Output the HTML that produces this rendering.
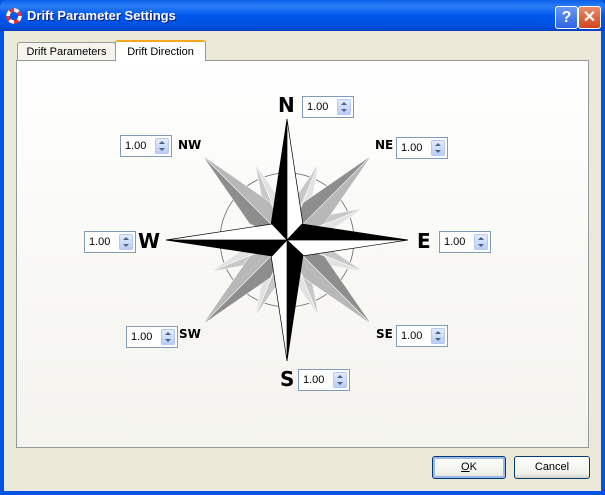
<!DOCTYPE html>
<html><head><style>
body{margin:0;width:605px;height:495px;overflow:hidden;font-family:Tahoma,"Liberation Sans",sans-serif;font-size:11px;}
.win{position:absolute;left:0;top:0;width:605px;height:495px;background:#0054e3;}
.title{position:absolute;left:0;top:0;width:605px;height:31px;background:linear-gradient(#0a5fe8,#2b7cf5 20%,#0058ee 50%,#0050de 85%,#0040c0);border-radius:7px 7px 0 0;}
.title span{position:absolute;left:27px;top:8px;color:#fff;font-weight:bold;font-size:13px;font-family:"Liberation Sans",sans-serif;text-shadow:1px 1px #0a1f80;}
.body{position:absolute;left:4px;top:31px;width:597px;height:460px;background:#ece9d8;}
.tb{position:absolute;top:6px;width:21px;height:21px;border:1px solid #fff;border-radius:3px;color:#fff;font-weight:bold;text-align:center;font-size:16px;line-height:21px;font-family:"Liberation Sans",sans-serif;}
.panel{position:absolute;left:16px;top:60px;width:571px;height:386px;border:1px solid #919b9c;background:linear-gradient(#fff,#fbfbf9 30%,#f4f3ee);}
.tab{position:absolute;height:18px;border:1px solid #919b9c;border-bottom:none;border-radius:3px 3px 0 0;font-size:11px;line-height:18px;text-align:center;}
.sp{position:absolute;width:50px;height:20px;border:1px solid #7f9db9;background:#fff;}
.sp span{position:absolute;left:4px;top:4px;font-size:11px;}
.sp i{position:absolute;right:2px;top:2px;width:14px;height:16px;background:linear-gradient(#e4ecfd,#b9cdf6);border:1px solid #b5c8f0;border-radius:2px;box-sizing:border-box}
.sp i:before{content:"";position:absolute;left:3px;top:2px;border:3px solid transparent;border-bottom:3px solid #4d6185;border-top:none;}
.sp i:after{content:"";position:absolute;left:3px;top:9px;border:3px solid transparent;border-top:3px solid #4d6185;border-bottom:none;}
.lb{position:absolute;font-weight:bold;font-family:"DejaVu Sans",sans-serif;font-size:12px;}
.big{font-size:20px;}
.btn{position:absolute;top:456px;height:21px;border:1px solid #003c74;border-radius:3px;background:linear-gradient(#fff,#f0f0ea 80%,#d6d0c5);text-align:center;line-height:21px;font-size:11px;}
</style></head><body>
<div class="win">
<div class="title">
<svg style="position:absolute;left:6px;top:8px" width="16" height="16"><circle cx="8" cy="8" r="6" fill="none" stroke="#e33" stroke-width="3.5"/><circle cx="8" cy="8" r="6" fill="none" stroke="#fff" stroke-width="3.5" stroke-dasharray="4.7 4.7"/></svg>
<span>Drift Parameter Settings</span>
<div class="tb" style="left:555px;background:linear-gradient(#6a97f5,#2d64e0)">?</div>
<div class="tb" style="left:578px;background:linear-gradient(#e98b6a,#d2451f)">✕</div>
</div>
<div class="body"></div>
<div class="tab" style="left:17px;top:42px;width:97px;background:#f5f4ee">Drift Parameters</div>
<div class="panel"></div>
<div class="tab" style="left:115px;top:40px;width:91px;height:21px;background:#fff;border-top:2px solid #f5a623;box-sizing:border-box;line-height:20px;border-bottom:none">Drift Direction</div>
<svg style="position:absolute;left:0;top:0" width="605" height="495">
<circle cx="287" cy="240" r="67" fill="none" stroke="#666" stroke-width="0.8"/>
<g stroke="#fff" stroke-width="0.5">
<g id="m"><polygon points="287,240 287,157 278,200" fill="#c8c8c8"/><polygon points="287,240 287,157 296,200" fill="#e2e2e2"/></g>
<use href="#m" transform="rotate(22.5 287 240)"/><use href="#m" transform="rotate(-22.5 287 240)"/>
<use href="#m" transform="rotate(67.5 287 240)"/><use href="#m" transform="rotate(112.5 287 240)"/>
<use href="#m" transform="rotate(157.5 287 240)"/><use href="#m" transform="rotate(202.5 287 240)"/>
<use href="#m" transform="rotate(247.5 287 240)"/>
<g id="d" transform="rotate(45 287 240)"><polygon points="287,240 287,120 272,202" fill="#8e8e8e"/><polygon points="287,240 287,120 302,202" fill="#b8b8b8"/></g>
<use href="#d" transform="rotate(90 287 240)"/><use href="#d" transform="rotate(180 287 240)"/><use href="#d" transform="rotate(270 287 240)"/>
</g>
<g stroke="#000" stroke-width="0.7">
<g id="p"><polygon points="287,240 287,119 271,225" fill="#000"/><polygon points="287,240 287,119 303,225" fill="#fff"/></g>
<use href="#p" transform="rotate(90 287 240)"/><use href="#p" transform="rotate(180 287 240)"/><use href="#p" transform="rotate(270 287 240)"/>
</g>
</svg>
<div class="lb big" style="left:278px;top:93px">N</div>
<div class="lb big" style="left:280px;top:367px">S</div>
<div class="lb big" style="left:417px;top:229px">E</div>
<div class="lb big" style="left:138px;top:229px">W</div>
<div class="lb" style="left:178px;top:138px">NW</div>
<div class="lb" style="left:375px;top:138px">NE</div>
<div class="lb" style="left:376px;top:327px">SE</div>
<div class="lb" style="left:179px;top:327px">SW</div>
<div class="sp" style="left:302px;top:96px"><span>1.00</span><i></i></div>
<div class="sp" style="left:396px;top:137px"><span>1.00</span><i></i></div>
<div class="sp" style="left:439px;top:231px"><span>1.00</span><i></i></div>
<div class="sp" style="left:396px;top:325px"><span>1.00</span><i></i></div>
<div class="sp" style="left:298px;top:369px"><span>1.00</span><i></i></div>
<div class="sp" style="left:126px;top:326px"><span>1.00</span><i></i></div>
<div class="sp" style="left:84px;top:231px"><span>1.00</span><i></i></div>
<div class="sp" style="left:120px;top:135px"><span>1.00</span><i></i></div>
<div class="btn" style="left:432px;width:72px;box-shadow:inset 0 0 0 2px #9db9eb"><u>O</u>K</div>
<div class="btn" style="left:514px;width:74px">Cancel</div>
</div>
</body></html>
